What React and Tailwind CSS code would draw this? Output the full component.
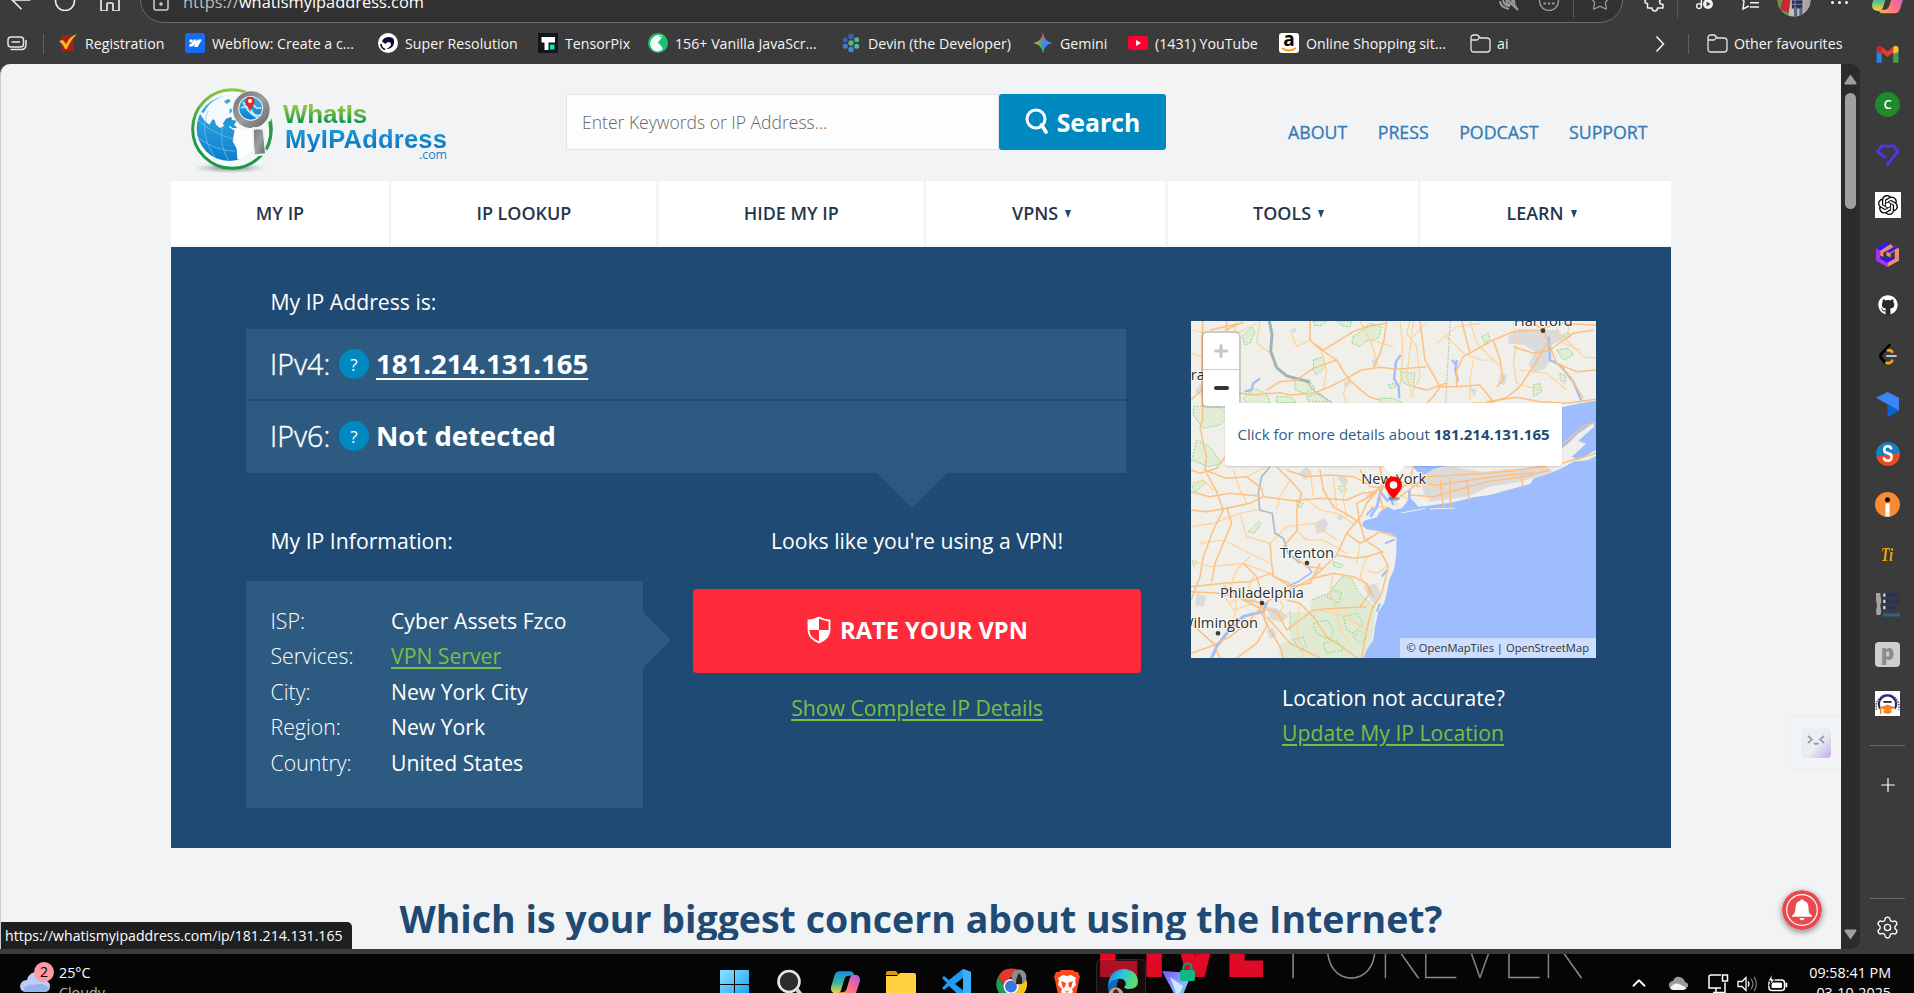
import React from "react";
import { Settings, Plus, ChevronUp, ArrowLeft, Star } from "lucide-react";
import { FaGithub } from "react-icons/fa";
import { SiOpenai } from "react-icons/si";

/* ---------- Browser toolbar ---------- */

function Copilot({ className, id }) {
  return (
    <svg className={className} viewBox="0 0 28 28">
      <defs>
        <linearGradient id={id + "a"} x1="0" y1="0" x2="0" y2="1">
          <stop offset="0" stopColor="#1b8ae0" />
          <stop offset=".5" stopColor="#2fb8a0" />
          <stop offset="1" stopColor="#ffd23c" />
        </linearGradient>
        <linearGradient id={id + "b"} x1="1" y1="0" x2="0" y2="1">
          <stop offset="0" stopColor="#a55be8" />
          <stop offset=".5" stopColor="#ff6a8d" />
          <stop offset="1" stopColor="#ffb04a" />
        </linearGradient>
      </defs>
      <path d="M9 3h9q3 0 4 4h-5q-3 0-4 3l-3 10q-1 3-4 3-6 0-5-6l3-10Q5 3 9 3z" fill={`url(#${id}a)`} />
      <path d="M19 25h-9q-3 0-4-3h5q3 0 4-3l3-10q1-3 4-3 6 0 5 6l-3 9q-1 4-5 4z" fill={`url(#${id}b)`} />
    </svg>
  );
}

function Toolbar() {
  return (
    <div className="flex h-[23px] shrink-0 items-end overflow-hidden">
      <div className="flex h-[47px] w-full shrink-0 items-center text-[#f3f3f3]">
        <ArrowLeft className="ml-[6px] size-[30px] shrink-0" strokeWidth={1.3} />
        <svg className="ml-[18px] size-[22px] shrink-0" viewBox="0 0 22 22" fill="none" stroke="currentColor" strokeWidth="1.6">
          <circle cx="11" cy="12" r="9.5" />
        </svg>
        <svg className="ml-[23px] size-[22px] shrink-0" viewBox="0 0 22 22" fill="none" stroke="currentColor" strokeWidth="1.6">
          <path d="M2 9l9-7 9 7v12q0 1-1 1h-4q-1 0-1-1v-6q0-1-1-1H9q-1 0-1 1v6q0 1-1 1H3q-1 0-1-1z" />
        </svg>
        <div className="ml-[19px] flex h-[47px] w-[1483px] shrink-0 items-center rounded-full border border-[#6e6e6e] bg-[#313131]">
          <svg className="mt-[2px] ml-[12px] h-[20px] w-[16px] shrink-0" viewBox="0 0 16 20" fill="none" stroke="#cfcfcf" strokeWidth="1.500">
            <rect x="1" y="1" width="14" height="18" rx="2" />
            <circle cx="8" cy="13" r="1" fill="#cfcfcf" />
          </svg>
          <span className="mt-[6px] ml-[14px] text-[16.400px] leading-none text-[#bdbdbd]">
            https://<span className="text-white">whatismyipaddress.com</span>
          </span>
          <div className="ml-auto flex items-center text-[#9a9a9a]">
            <svg className="size-[22px]" viewBox="0 0 22 22" fill="none" stroke="currentColor" strokeWidth="2">
              <path d="M2 12q0 6 9 8M5 11q1 6 7 6M2 3l18 18" />
              <path d="M12 9q6 2 4 8l3 1" />
              <circle cx="11.500" cy="12.500" r="3" />
            </svg>
            <svg className="ml-[18px] size-[22px]" viewBox="0 0 22 22" fill="none" stroke="currentColor" strokeWidth="1.400">
              <circle cx="11" cy="12" r="9.500" />
              <path d="M5.500 14.500h2.400M9.800 14.500h2.400M14.100 14.500h2.400" strokeWidth="2.200" />
            </svg>
            <div className="ml-[13px] h-[36px] w-px bg-[#5a5a5a]" />
            <Star className="mr-[10px] ml-[14px] size-[24px]" strokeWidth={1.3} />
          </div>
        </div>
        <svg className="ml-[20px] size-[24px] shrink-0" viewBox="0 0 24 24" fill="none" stroke="currentColor" strokeWidth="1.500" strokeLinejoin="round">
          <path d="M4 6h5q0-4 3-4t3 4h5v5q-3.500 0-3.500 2.700T20 16.500V20h-5.500q0 3-2.700 3T9 20H4.500v-4.500Q2 15.500 2 13.500T4.500 11z" />
        </svg>
        <div className="ml-[10px] h-[36px] w-px shrink-0 bg-[#5a5a5a]" />
        <svg className="ml-[17px] size-[20px] shrink-0" viewBox="0 0 20 20" fill="none" stroke="currentColor" strokeWidth="1.400">
          <circle cx="4" cy="16" r="2.400" />
          <path d="M6.400 16V3l6-2" />
          <circle cx="13" cy="14" r="5" fill="#f3f3f3" stroke="none" />
          <path d="M11.600 11.500v5l4-2.500z" fill="#3b3b3b" stroke="none" />
        </svg>
        <svg className="ml-[23px] size-[22px] shrink-0" viewBox="0 0 22 22" fill="none" stroke="currentColor" strokeWidth="1.500">
          <path d="M1 7l5 5-1 8 6-3M12 9.500h9M12 13.700h9M12 18h9" />
        </svg>
        <svg className="ml-[17px] size-[34px] shrink-0" viewBox="0 0 32 32">
          <defs>
            <clipPath id="av"><circle cx="16" cy="16" r="15.500" /></clipPath>
          </defs>
          <g clipPath="url(#av)">
            <path d="M0 0h32v32H0z" fill="#c9bdb0" />
            <path d="M0 14h11v18H0z" fill="#6d8f3e" />
            <path d="M6 12l7 2-2 14-8-3z" fill="#c22a35" />
            <path d="M14 10h10v14H14z" fill="#27314f" />
            <path d="M16 23h3v9h-3zM21 23h3v9h-3z" fill="#55628e" />
            <path d="M14 16h10M14 20h10M17 10v14" stroke="#8a94b8" strokeWidth=".8" />
            <path d="M25 14h9v18h-9z" fill="#a9a4a0" />
          </g>
        </svg>
        <div className="mt-[5px] ml-[20px] flex shrink-0 gap-[4px]">
          <i className="size-[3px] rounded-full bg-white" />
          <i className="size-[3px] rounded-full bg-white" />
          <i className="size-[3px] rounded-full bg-white" />
        </div>
        <Copilot className="ml-[23px] size-[34px] shrink-0" id="cp1" />
      </div>
    </div>
  );
}

/* ---------- Favourites bar ---------- */

const folder = (
  <svg className="size-[21px]" viewBox="0 0 21 21" fill="none" stroke="#e6e6e6" strokeWidth="1.300">
    <path d="M1 5q0-3 3-3h3.500l3 3H17q3 0 3 3v8q0 3-3 3H4q-3 0-3-3zM1 7h5.500q1 0 1.500-.7L9.500 4" />
  </svg>
);

const icons = {
  reg: (
    <svg viewBox="0 0 20 20">
      <path d="M3 2h12l1 16H3z" fill="#a81f1c" />
      <path d="M1 8l4-1 3 4q4-8 11-10-7 7-10 15H7q-2-5-6-8z" fill="#f5b81c" />
    </svg>
  ),
  webflow: (
    <svg viewBox="0 0 20 20">
      <rect width="20" height="20" rx="2.500" fill="#146ef5" />
      <path d="M17 6.500l-4.500 7.500H9l1.400-3Q8.500 13.700 4.500 14V11q2 0 3-1.500H4.500V6.500h3.200v2.500l1.400-2.500h2.300v2.500l1.500-2.500z" fill="#fff" />
    </svg>
  ),
  superres: (
    <svg viewBox="0 0 20 20">
      <circle cx="10" cy="10" r="10" fill="#fff" />
      <path d="M4 8q2-4 7-4 6 0 5 6-1 6-8 6 5-2 5-5 0-2-2.500-2Q8 9 8 11q-3-1-4-3z" fill="#0b0b33" />
      <path d="M3 11q0 4 4 5.500" stroke="#0b0b33" strokeWidth="1.600" fill="none" />
    </svg>
  ),
  tensor: (
    <svg viewBox="0 0 20 20">
      <rect width="20" height="20" fill="#0f171c" />
      <path d="M3.500 4H17v5.500h-6.500V17H6.500V9.500h-3z" fill="#fff" />
      <path d="M12 11.500h4.500v5H12z" fill="#00f0b0" />
    </svg>
  ),
  vanilla: (
    <svg viewBox="0 0 20 20">
      <circle cx="10" cy="10" r="10" fill="#1dbf73" />
      <path d="M15 3L10.500 9.500 15 15.500q-2 3-6 3-6-1-7-8 1-7 8-8.500 3 0 5 1z" fill="#f4fff9" />
      <path d="M11 3l4 1-5 6" stroke="#1dbf73" fill="none" />
    </svg>
  ),
  devin: (
    <svg viewBox="0 0 20 20">
      <circle cx="10" cy="3.500" r="2.700" fill="#3e5fc0" />
      <circle cx="4.300" cy="6.700" r="2.500" fill="#3b5cb8" />
      <circle cx="15.700" cy="6.700" r="2.500" fill="#4cb68f" />
      <circle cx="10" cy="10" r="2.700" fill="#4cb68f" />
      <circle cx="4.300" cy="13.300" r="2.500" fill="#3f7fc8" />
      <circle cx="15.700" cy="13.300" r="2.500" fill="#53b9a0" />
      <circle cx="10" cy="16.500" r="2.700" fill="#3e8fdc" />
    </svg>
  ),
  gemini: (
    <svg viewBox="0 0 20 20">
      <defs>
        <linearGradient id="gm1" x1="0" y1=".5" x2="1" y2=".5">
          <stop offset="0" stopColor="#fbbc04" />
          <stop offset=".35" stopColor="#5fae6a" />
          <stop offset=".55" stopColor="#4285f4" />
          <stop offset="1" stopColor="#3186ff" />
        </linearGradient>
        <linearGradient id="gm2" x1="0" y1="0" x2="0" y2="1">
          <stop offset="0" stopColor="#ff4641" />
          <stop offset=".45" stopColor="#ff4641" stopOpacity="0" />
          <stop offset=".65" stopColor="#0ebc5f" stopOpacity="0" />
          <stop offset="1" stopColor="#0ebc5f" />
        </linearGradient>
      </defs>
      <path d="M10 0q1.500 8.500 9.500 10-8 1.500-9.500 10Q8.500 11.500.5 10 8.500 8.500 10 0z" fill="url(#gm1)" />
      <path d="M10 0q1.500 8.500 9.500 10-8 1.500-9.500 10Q8.500 11.500.5 10 8.500 8.500 10 0z" fill="url(#gm2)" />
    </svg>
  ),
  youtube: (
    <svg viewBox="0 0 20 20">
      <rect y="3" width="20" height="14" rx="3" fill="#ff0033" />
      <path d="M8 7v6l5-3z" fill="#fff" />
    </svg>
  ),
  amazon: (
    <div className="relative flex size-[20px] items-center justify-center rounded-[3px] bg-white text-[19px] leading-none font-bold text-black">
      <span className="-mt-[7px]">a</span>
      <svg className="absolute inset-x-0 bottom-0" viewBox="0 0 20 6">
        <path d="M3 1q7 5 14 0" stroke="#ff9900" strokeWidth="1.800" fill="none" />
      </svg>
    </div>
  ),
  folder,
};

const bookmarks = [
  ["reg", "Registration", "w-[127px]"],
  ["webflow", "Webflow: Create a c...", "w-[193px]"],
  ["superres", "Super Resolution", "w-[160px]"],
  ["tensor", "TensorPix", "w-[110px]"],
  ["vanilla", "156+ Vanilla JavaScr...", "w-[193px]"],
  ["devin", "Devin (the Developer)", "w-[192px]"],
  ["gemini", "Gemini", "w-[95px]"],
  ["youtube", "(1431) YouTube", "w-[151px]"],
  ["amazon", "Online Shopping sit...", "w-[191px]"],
  ["folder", "ai", "w-[182px]"],
];

function FavouritesBar() {
  return (
    <div className="flex h-[41px] shrink-0 items-center text-[14.200px] whitespace-nowrap text-[#f5f5f5]">
      <svg className="ml-[7px] h-[15px] w-[20px]" viewBox="0 0 20 15" fill="none" stroke="#e6e6e6" strokeWidth="1.500">
        <rect x="1" y="1" width="15.500" height="10" rx="3" />
        <path d="M4.500 6H13M3.500 13.500H14q5 0 5-5V4" />
      </svg>
      <div className="mr-[14px] ml-[16px] h-[20px] w-px bg-[#616161]" />
      {bookmarks.map(([k, label, w]) => (
        <div key={k} className={"flex shrink-0 items-center gap-[7px] " + w}>
          <div className="w-[20px] shrink-0">{icons[k]}</div>
          <span>{label}</span>
        </div>
      ))}
      <svg className="ml-[3px] h-[18px] w-[10px]" viewBox="0 0 10 18" fill="none" stroke="#f5f5f5" strokeWidth="1.500">
        <path d="M1.500 1.500L8.500 9l-7 7.500" />
      </svg>
      <div className="mr-[18px] ml-[23px] h-[20px] w-px bg-[#616161]" />
      <div className="flex items-center gap-[6px]">
        {folder}
        <span>Other favourites</span>
      </div>
    </div>
  );
}

/* ---------- Site header ---------- */

function Logo() {
  return (
    <div className="flex w-[261px]">
      <svg className="h-[88px] w-[86px] shrink-0" viewBox="27 18 258 264">
        <defs>
          <linearGradient id="ring" x1="0" y1="0" x2="0" y2="1">
            <stop offset="0" stopColor="#8dc63f" />
            <stop offset=".5" stopColor="#2b9a48" />
            <stop offset="1" stopColor="#119a48" />
          </linearGradient>
          <linearGradient id="sea" x1="0" y1="0" x2="0" y2="1">
            <stop offset="0" stopColor="#3db1e8" />
            <stop offset="1" stopColor="#0c7fcb" />
          </linearGradient>
          <radialGradient id="shade">
            <stop offset="0" stopColor="#555" stopOpacity=".75" />
            <stop offset="1" stopColor="#888" stopOpacity="0" />
          </radialGradient>
          <linearGradient id="metal" x1="0" y1="0" x2="1" y2="1">
            <stop offset="0" stopColor="#77787a" />
            <stop offset=".5" stopColor="#9c9ea0" />
            <stop offset="1" stopColor="#6d6e70" />
          </linearGradient>
          <clipPath id="gc"><circle cx="148" cy="145" r="99" /></clipPath>
        </defs>
        <ellipse cx="150" cy="264" rx="108" ry="16" fill="url(#shade)" />
        <circle cx="156" cy="147" r="118" fill="#f6f8f9" stroke="url(#ring)" strokeWidth="9" />
        <circle cx="148" cy="145" r="98" fill="url(#sea)" />
        <g clipPath="url(#gc)">
          <path d="M72 98Q92 54 150 44l110-4v110l-60 6-40-6-14-10-14-2-12 6-12-10-4-14-6-2-10 16-14-12-10-14-6-12z" fill="#f5f9fb" />
          <path d="M164 148l46 4h50v60l-44 4-16 14-16 12-12-6-2-30-12-22z" fill="#fdfefe" />
          <path d="M132 64l14-8 6 8-12 8zM100 78l12-14M150 84l8 8-10 10z" fill="#2ea3de" />
          <path d="M128 132l10-16 16-6 2 10 14 2-8 12 10 10-14 0-8-6-10 6z" fill="#1f97d8" />
          <path d="M50 170q50 40 115 44M54 120q40 40 110 58M84 92q-30 70 26 148M128 138q-12 60 20 106" fill="none" stroke="#7cc7ef" strokeWidth="2" />
        </g>
        <path d="M214 34q60 0 62 60l-4 30q-6 14-22 16l-20-4z" fill="#f1f3f5" />
        <circle cx="214" cy="89" r="57" fill="#f6f8f9" />
        <circle cx="214" cy="89" r="46" fill="url(#metal)" stroke="url(#metal)" strokeWidth="18" />
        <circle cx="212" cy="85" r="37" fill="#f2f6f8" />
        <circle cx="212" cy="85" r="34" fill="url(#sea)" />
        <path d="M184 84q20-12 30 8t30 12M190 66q10 30 44 48M200 56l30 28 14 0" fill="none" stroke="#cfe9f7" strokeWidth="5" />
        <path d="M211 92q-15-20-15-28a14 14 0 0 1 28 0q0 8-13 28z" fill="#dd2b22" />
        <circle cx="210" cy="63" r="6" fill="#fff" />
        <path d="M216 142l38-2 6 86-42 4z" fill="#f1f3f5" />
        <path d="M222 150q14-5 26 0l7 70-30 3q-4-40-3-73z" fill="url(#metal)" />
        <path d="M269 124q10 48-10 84" fill="none" stroke="#2b9a48" strokeWidth="9" />
      </svg>
      <div className="ml-[8px] flex flex-col pt-[16px] font-['Liberation_Sans',Arial,sans-serif] font-bold">
        <span className="bg-linear-to-b from-[#8dc63f] from-20% to-[#119a48] to-80% bg-clip-text text-[26px] leading-[24px] tracking-[-0.200px] text-transparent">
          WhatIs
        </span>
        <span className="bg-linear-to-b from-[#1da1e0] to-[#0a6fb8] bg-clip-text pl-[2px] text-[25.500px] leading-[26px] tracking-[0.220px] text-transparent">
          MyIPAddress
        </span>
        <span className="-mt-[3px] self-end font-['Open_Sans'] text-[12.400px] leading-[12px] font-normal text-[#1584c7]">.com</span>
      </div>
    </div>
  );
}

function SiteHeader() {
  return (
    <div className="flex h-[117px] items-start">
      <div className="pt-[22px] pl-[18px]">
        <Logo />
      </div>
      <div className="mt-[30px] ml-[116px] flex h-[56px] w-[600px]">
        <div className="flex flex-1 items-center border border-[#e1e3e5] bg-[#fdfdfd] pl-[15px] text-[17.550px] font-light text-[#666]">
          Enter Keywords or IP Address...
        </div>
        <button className="flex w-[167px] items-center justify-center gap-[8px] rounded-[3px] bg-[#0088c1] pt-[1px] text-[24.800px] font-bold text-white">
          <svg className="-mt-[3px] h-[26px] w-[24px]" viewBox="0 0 24 26" fill="none" stroke="#fff">
            <circle cx="11" cy="11" r="9" strokeWidth="3" />
            <path d="M16.500 17l4.500 7" strokeWidth="3.800" strokeLinecap="round" />
          </svg>
          Search
        </button>
      </div>
      <div className="mt-[53px] ml-[122px] flex gap-[30.500px] text-[17.750px] leading-[30px] text-[#337ab7] [-webkit-text-stroke:0.300px_#337ab7]">
        <a>ABOUT</a>
        <a>PRESS</a>
        <a>PODCAST</a>
        <a>SUPPORT</a>
      </div>
    </div>
  );
}

const nav = [
  ["MY IP", false, "w-[218px]"],
  ["IP LOOKUP", false, "w-[265px]"],
  ["HIDE MY IP", false, "w-[265px]"],
  ["VPNS", true, "w-[239px]"],
  ["TOOLS", true, "w-[250px]"],
  ["LEARN", true, "flex-1"],
];

function Nav() {
  return (
    <div className="mb-px flex h-[65px] gap-[2.400px]">
      {nav.map(([t, sub, w]) => (
        <div key={t} className={"flex items-center justify-center gap-[7px] bg-white text-[17.950px] font-semibold text-[#26364a] " + w}>
          {t}
          {sub && <i className="mr-[8px] size-0 border-x-[3.500px] border-t-[8px] border-x-transparent border-t-[#1f4a73]" />}
        </div>
      ))}
    </div>
  );
}

/* ---------- Map ---------- */

const mainRoads = [
  "M68 33V330L60 350 70 400 80 440 75 480 110 545 130 600 100 660 70 740 60 800 33 870",
  "M140 33L138 60 190 35M90 60L190 38M390 33V90L410 110 470 150 500 200 530 230 570 262 600 270",
  "M620 33L612 90 600 130 580 175M33 270L80 225 120 205 150 245 220 255 300 248 330 255 400 250 450 230 500 205 545 180 600 172 650 178 740 170",
  "M400 100L430 120 520 65 560 50 620 40M470 150L400 175 350 210 300 215 260 240",
  "M720 33L735 150 780 230 760 260 740 280M780 230H830V180L850 140 940 90 1000 65 1080 60 1130 40 1248 45",
  "M845 33L870 130M830 230L900 225 940 275M940 90L960 150 970 210 950 230M1050 33L1090 60 1110 110 1130 160 1170 200 1210 265",
  "M1000 110L1060 130 1110 120 1180 70 1240 60M1130 160L1190 185 1248 180M1100 100L1060 170 1020 230 980 262 930 278 880 279",
  "M920 275L1010 262 1080 275 1160 280 1248 268M700 230L740 240 800 220",
  "M33 600L80 605 140 595 210 580 250 560 245 535 200 500 140 505 75 480",
  "M33 480L60 490 110 475 135 440M250 560L340 572 420 565 500 570 545 550 590 545",
  "M33 545L90 560 150 550 240 558M140 590L155 640 130 700 105 760 95 815",
  "M290 470L330 510 365 550 350 600 352 660 310 710M320 480L380 500 450 495 520 500 560 520 600 510",
  "M420 480L430 540 460 590 520 625 540 640 530 580 570 560 610 520",
  "M590 545L560 580 545 615 500 670 470 735 430 775 395 805 350 830 300 850 255 880 200 940 150 980 90 1010 33 1030",
  "M540 640L555 690 600 720 625 770 605 850 575 900 560 960 545 1044",
  "M500 670L540 700 560 690 600 665 648 680M470 735L520 745 560 740 610 725",
  "M400 805L460 790 520 800 560 820 580 860M430 775L380 770 340 735",
  "M33 830L130 820 210 815 270 790 330 830 390 820 420 760",
  "M190 760L230 800 245 850 240 900 270 960 300 1010 310 1044M130 825L180 865 230 890 290 905 320 960 400 900 470 895 560 890",
  "M270 700L275 760 280 800 330 820M33 845L120 850 200 870 250 880",
  "M320 870L360 880 400 920 440 980 500 1020 530 1044M250 900L260 950 230 1000 170 1044M33 940L100 1000 120 1044",
  "M260 920L330 1000 420 1044M540 890L570 850 560 820",
  "M600 480L612 520 600 560 610 600M640 510L680 520 720 530M660 560L740 500 830 495 920 490 1020 480 1146 460 1200 445 1248 430",
  "M690 555L760 560 830 540 920 515 1030 500 1110 480M700 520L780 525 870 510 980 495 1060 488",
  "M780 510L790 590M810 505L812 590M860 510L868 570M1025 495L1028 528M1146 405L1180 375 1210 348 1240 340",
  "M600 470L610 530 560 560M700 470L690 510 660 540M540 480L570 530 640 535 700 520",
];
const minorRoads = [
  "M33 60L100 75 170 70 230 40M33 130L68 140M170 33L160 90 130 130 68 160M240 33L230 100 270 130",
  "M330 60L350 110 390 90M420 110L440 180 430 240M540 33L570 90 590 150M510 205L490 250 500 280M570 90L640 110",
  "M690 33L680 70 710 110 720 200 690 260M735 40L700 80M800 80L850 130 900 150 940 150M870 33L890 100 960 170M770 100L830 50 900 40",
  "M660 33L668 100 665 190 655 260M700 33L690 120 680 200 700 260M1020 180L1100 190 1160 240M1130 50L1150 100 1200 120",
  "M1000 33L1010 100 1000 160 1010 220 1080 240M1170 33L1160 90 1210 140 1248 145M880 150L870 210 870 270",
  "M33 520L70 510 100 540M160 480L180 540 200 580M200 500L260 470M370 560L420 600 470 610 520 640M330 510L300 560 290 600",
  "M33 650L100 640 180 610 230 600M180 610L200 680 270 700 320 650 400 640 470 690M60 700L130 690 190 720 270 760",
  "M33 750L90 770 190 760 270 790M350 660L380 690 430 690 500 730M150 830L170 780 210 740",
  "M130 850L160 900 220 880M170 870L160 940 110 960M220 800L200 850 150 880M290 850L310 890 280 930 330 910",
  "M460 790L450 850 470 895 480 960 510 1000M420 900L500 920 560 960M360 880L350 960 370 1044M560 740L540 800 560 830M540 700L530 760",
  "M620 770L590 790 560 780M390 480L400 560M460 500L470 590M500 500L490 570 500 620M570 590L620 590 600 610",
  "M640 540L650 590M630 540L690 570M730 480L760 530 860 550M880 485L930 510M960 480L1000 510M1080 475L1100 490",
];
const parks = [
  "M520 80l30-20 20-20 35 10-10 35-40 10-15 15-25-10z", "M215 50l10 15-15 35-15 5-8-25z", "M40 290l70-5 35 30-25 30-50 10-30-40z",
  "M50 390l40 20 35 50-40 10-50-20z", "M345 205l45 10 15 20-30 15-30-10z", "M400 150l30-10 5 30-25 25-10-15z",
  "M660 185l45 5-5 40-30-10z", "M905 80l20-10 5 20-15 10z", "M1130 120l35-5 15 20-30 15z", "M1060 225l20-5 5 25-25 15z",
  "M190 265l30-30 40 15 10 30h-70z", "M600 265l40 0 30 15h-70z", "M35 530l30-20 10 10-30 25z", "M205 665l30-30 8 5-20 30z",
  "M36 750l15 5-10 15z", "M460 755l30 10-10 10-20-8z", "M350 572l20 8-8 12-14-8z", "M1150 75l15-8 5 15-12 5z",
  "M1140 190l18 10-4 20-14-12z", "M290 260l40 0 20 18h-60z", "M380 260l40-10 25 25h-60z", "M475 530l18-4 8 14-18 6z", "M625 225l18-5 5 10-18 6z",
  "M400 33l40 0-15 14h-20zM470 33l45 0-5 18-25-4z",
];
const urban = [
  "M985 80l30-25 60 5 60 0 20 25-40 20 0 40-20 30-30 15-20-25 20-40-30-20-50-5z", "M720 485l90-15 100 15 110-10 80-5 20 15-100 30-90 15-70 30-110 15-20-30z",
  "M405 640l25-15 15 15-10 25-25 5z", "M355 490l25-20 15 20-20 20z", "M470 505l20-10 15 20-15 10z", "M550 830l40-10 15 40-20 25-15-20z",
  "M260 890l30 5 35 25-20 15-35-10z", "M490 220l20-15 5 15-20 15z", "M575 150l15-5 5 20-15 5z", "M335 55h15l-5 12h-10z", "M870 230l20 10-8 20z",
  "M60 220l15 10-15 25-15-10z", "M50 850l30 10-10 30-25-5z", "M260 960l20-8 10 25-20 10z", "M470 620l15-8 8 12-15 8z", "M190 860l30-5 10 20-25 5z", "M960 190l20 5-5 30-20-5z",
];

function MapView() {
  return (
    <div className="relative h-[337px] w-[405px] overflow-hidden">
      <svg className="h-[337px] w-[405px]" viewBox="33 33 1215 1011">
        <rect x="33" y="33" width="1215" height="1011" fill="#f0efe9" />
        <path d="M395 870l50-20 40-50 30 5 20 40 50 50-5 60-10 90H295l10-50 25 0 0-85 60-5z" fill="#e0ead2" />
        <path d="M400 940l40-10 20 30-10 30-40-20zM440 860l20-20 25 10-10 30zM490 920l40-10 20 30-30 30-20-10zM430 1000l40-10 20 30-50 10zM520 980l20-20 20 20-20 20zM395 870l50-20 40-50 30 5 20 40 50 50M330 905l0 60M340 990l30-10 10 30-20 10z" fill="none" stroke="#8fd890" strokeWidth="3" strokeDasharray="6 4" />
        {urban.map((d) => <path key={d} d={d} fill="#dcdbdb" />)}
        {parks.map((d) => <path key={d} d={d} fill="#e3ecd5" stroke="#85dc8c" strokeWidth="3" strokeDasharray="6 4" />)}
        <g fill="none" stroke="#ffd396" strokeWidth="3.500" strokeLinejoin="round">
          {minorRoads.map((d) => <path key={d} d={d} />)}
        </g>
        <path d="M1248 272L1200 280 1146 292 720 440 700 470 712 485 735 492 765 476 790 470 1146 415 1165 400 1195 370 1242 338 1242 350 1195 392 1218 402 1175 440 1195 450 1248 420z" fill="#9dbdff" />
        <path
          d="M1248 437L1225 450 1180 455 1145 475 1110 490 1062 505 1050 522 930 555 880 562 820 577 740 588 715 590 700 572 688 562 678 580 665 595 640 600 625 590 600 605 590 622 552 632 545 645 560 658 600 664 635 672 650 685 649 730 643 775 628 810 620 850 612 880 595 905 585 950 580 990 560 1020 550 1044H1248z"
          fill="#9dbdff"
        />
        <path d="M665 609l70-14M750 597l75-3" stroke="#f0efe9" strokeWidth="3" />
        <g fill="none" stroke="#9dbdff" strokeLinejoin="round">
          <path d="M662 135l-14 20-6 50 14 25 2 35M830 150l-4 30 8 34M816 150l12 14M240 205l-20 15-6 20-20 4M1106 80l4 70 30 15 40 50 25 60" strokeWidth="7" />
          <path d="M95 1044l15-35 35-45 45-45 60-15 10-25" strokeWidth="9" />
          <path d="M320 830l40-18 35-25-15-25" strokeWidth="5" />
          <path d="M605 530l-14 60-20 30M600 545l25 30M625 545l15 40M688 540l0 25" strokeWidth="8" />
          <path d="M560 615l20-22M600 880l-10 25M615 700l30-12M605 800l16-20M645 645l3 18" strokeWidth="6" />
        </g>
        <path d="M270 470l-25 30-10 50 4 50 38 10 8 60 25 15 15 45 35 30" fill="none" stroke="#a9bccb" strokeWidth="5" />
        <path d="M375 210l30 35 50 32" fill="none" stroke="#b6c0c6" strokeWidth="4" />
        <path d="M268 33l8 40-4 50 18 50 30 25 70 18" fill="none" stroke="#9fb5b0" strokeWidth="9" />
        <path d="M811 33l-6 100-8 145" fill="none" stroke="#c2c2c4" strokeWidth="3.500" strokeDasharray="5 3" />
        <g fill="none" stroke="#fdc080" strokeWidth="4.500" strokeLinejoin="round">
          {mainRoads.map((d) => <path key={d} d={d} />)}
        </g>
        <g fill="#3c3c3c">
          <circle cx="1089" cy="62" r="7" />
          <circle cx="381" cy="759" r="7" />
          <circle cx="246" cy="879" r="7" />
          <circle cx="114" cy="970" r="7" />
        </g>
        <g fontSize="43.900" fill="#2c2c2c" stroke="#fff" strokeOpacity=".85" strokeWidth="6" strokeLinejoin="round" paintOrder="stroke" fontFamily="'Open Sans', sans-serif">
          <text x="1090" y="47" textAnchor="middle">Hartford</text>
          <text x="-13" y="209">Scranton</text>
          <text x="641" y="523" textAnchor="middle">New York</text>
          <text x="381" y="744" textAnchor="middle">Trenton</text>
          <text x="246" y="864" textAnchor="middle">Philadelphia</text>
          <text x="234" y="955" textAnchor="end">Wilmington</text>
        </g>
      </svg>
      <div className="absolute top-[10px] left-[10px] flex h-[77px] w-[40px] flex-col overflow-hidden rounded-[6px] border-2 border-black/15 bg-white bg-clip-padding">
        <div className="flex flex-1 items-center justify-center border-b border-[#ccc]">
          <svg className="size-[16px]" viewBox="0 0 16 16" stroke="#c8c8c8" strokeWidth="3.200" strokeLinecap="round">
            <path d="M2.500 8h11M8 2.500v11" />
          </svg>
        </div>
        <div className="flex flex-1 items-center justify-center">
          <div className="h-[4px] w-[15px] rounded-full bg-[#333]" />
        </div>
      </div>
      <div className="absolute top-[82px] left-[34px] flex h-[63px] w-[337px] items-center justify-center rounded-[3px] bg-white text-[15px] whitespace-nowrap text-[#2f5d87] shadow-[0_1px_2px_rgba(0,0,0,0.150)]">
        <span>Click for more details about&nbsp;</span>
        <b className="text-[#1f4a73]">181.214.131.165</b>
      </div>
      <svg className="absolute top-[144px] left-[187px] h-[36px] w-[32px]" viewBox="0 0 32 36">
        <path d="M4 0h24L16 12z" fill="#fff" />
        <ellipse cx="16" cy="33.500" rx="6" ry="2" fill="#555" opacity=".5" />
        <path d="M15.500 34Q7 25 7 20a8.500 8.500 0 0 1 17 0q0 5-8.500 14z" fill="#fe0000" />
        <circle cx="15.500" cy="20" r="3.800" fill="#fff" />
      </svg>
      <div className="absolute right-0 bottom-0 flex h-[20px] items-center bg-white/50 pr-[7px] pl-[7px] text-[11.200px] whitespace-nowrap text-[#333]">
        © OpenMapTiles | OpenStreetMap
      </div>
    </div>
  );
}

/* ---------- Hero ---------- */

const info = [
  ["ISP:", "Cyber Assets Fzco"],
  ["Services:", "VPN Server", true],
  ["City:", "New York City"],
  ["Region:", "New York"],
  ["Country:", "United States"],
];

const greenLink = "text-[#76c043] underline decoration-[1.500px] underline-offset-[3px]";

function IpRow({ label, value, link, className }) {
  return (
    <div className={"flex items-center bg-[#2d5a80] pl-[24px] leading-none " + className}>
      <span className="w-[69px] text-[28.600px] font-light [-webkit-text-stroke:0.400px_white]">{label}</span>
      <span className="flex size-[30px] items-center justify-center rounded-full bg-[#0088c1] text-[17px]">?</span>
      <b className={"ml-[7px] text-[27.500px] " + (link ? "underline decoration-2 underline-offset-[4px]" : "")}>{value}</b>
    </div>
  );
}

function Hero() {
  return (
    <div className="flex h-[601px] bg-[#1f4a73] pl-[75px] text-[21.200px] whitespace-nowrap text-white">
      <div className="w-[880px] shrink-0">
        <div className="mt-[40px] mb-[12px] pl-[24.500px] leading-[30px]">My IP Address is:</div>
        <IpRow label="IPv4:" value="181.214.131.165" link className="h-[70px]" />
        <IpRow label="IPv6:" value="Not detected" className="mt-[2px] h-[72px] pb-[2px]" />
        <div className="relative flex">
          <i className="absolute top-0 left-[631px] size-0 border-x-[35px] border-t-[35px] border-x-transparent border-t-[#2d5a80]" />
          <div className="w-[397px] shrink-0 pt-[53px]">
            <div className="pl-[24.500px] leading-[30px]">My IP Information:</div>
            <div className="relative mt-[25px] h-[227px] bg-[#2d5a80] pt-[22px] pl-[24.500px]">
              <i className="absolute top-[31px] left-full size-0 border-y-[28px] border-l-[28px] border-y-transparent border-l-[#2d5a80]" />
              {info.map(([k, v, link]) => (
                <div key={k} className="flex h-[35.400px] items-center leading-none">
                  <span className="w-[120.500px] text-[21.300px] font-light">{k}</span>
                  <span className={link ? greenLink : ""}>{v}</span>
                </div>
              ))}
            </div>
          </div>
          <div className="ml-[50px] flex w-[448px] shrink-0 flex-col items-center pt-[53px]">
            <div className="leading-[30px]">Looks like you're using a VPN!</div>
            <button className="mt-[33px] flex h-[84px] w-full items-center justify-center gap-[9px] rounded-[4px] bg-[#ff2a39] pl-[1px] text-[23.700px] font-bold">
              <svg className="-mt-[2px] h-[28px] w-[24px]" viewBox="0 0 24 28">
                <path d="M12 1.500q6 3 10.500 3V14q0 8-10.500 12.500Q1.500 22 1.500 14V4.500q4.500 0 10.500-3z" fill="none" stroke="#fff" strokeWidth="1.800" />
                <path d="M12 1.500V14H1.500V4.500q4.500 0 10.500-3zM12 14h10.500Q22 22 12 26.500z" fill="#fff" />
              </svg>
              RATE YOUR VPN
            </button>
            <a className={"mt-[20px] leading-[30px] " + greenLink}>Show Complete IP Details</a>
          </div>
        </div>
      </div>
      <div className="mt-[74px] ml-[65px] flex w-[405px] flex-col items-center">
        <MapView />
        <div className="mt-[22px] leading-[35px]">
          <div>Location not accurate?</div>
          <a className={greenLink}>Update My IP Location</a>
        </div>
      </div>
    </div>
  );
}

/* ---------- Browser side bar ---------- */

const side = [
  <svg viewBox="0 0 24 24">
    <path d="M1.500 6v14h5V10z" fill="#1e88e5" /><path d="M22.500 6v14h-5V10z" fill="#43a047" />
    <path d="M6.500 10V4.500L12 9l5.500-4.500V10L12 14.500z" fill="#e53935" />
    <path d="M1.500 9.500V6q0-2.500 3-2.500l2 1V11z" fill="#c62828" /><path d="M22.500 9.500V6q0-2.500-3-2.500l-2 1V11z" fill="#fbc02d" />
  </svg>,
  <div className="flex size-[25px] items-center justify-center rounded-full bg-[#1e8a2b] text-[13px] leading-none font-semibold text-white">C</div>,
  <svg viewBox="0 0 24 24" fill="none" stroke="#5333ed" strokeWidth="2.600"><path d="M10.500 15.500L2.500 9 6 4h12l4 5-9.500 12-1-2" /></svg>,
  <div className="flex size-[26px] items-center justify-center bg-white text-black"><SiOpenai className="size-[20px]" /></div>,
  <svg viewBox="0 0 24 24">
    <path d="M12 0L1 6v12l11 6v-4l-7-4V9z" fill="#a633f5" />
    <path d="M12 0L1 6l4 2.500L15 3z" fill="#2a1bf5" />
    <path d="M15 2L5 8.500V13l3 1.500V10l10-5z" fill="#ee8a76" />
    <path d="M5 16l7 4 7-4-3-2-4 2-4-2z" fill="#2a1bf5" />
    <path d="M12 24l11-6V6l-4 2v8l-7 4z" fill="#ee8a76" />
    <path d="M23 6l-4-2-8 5v4l4 2v-4z" fill="#ee8a76" />
    <path d="M11 9l8-5 3 1.500-8 5z" fill="#2a1bf5" />
  </svg>,
  <div className="flex size-[20px] items-center justify-center rounded-full bg-[#24292f] text-white"><FaGithub className="size-[20px]" /></div>,
  <svg viewBox="0 0 24 24" fill="none" strokeLinecap="round">
    <path d="M14 3L6 11.500q-1.500 2 0 4l3.500 4" stroke="#050505" strokeWidth="2.800" />
    <path d="M12.500 8q2.500-.5 4 1.500M11 20q4 1 5.500-2" stroke="#ffa116" strokeWidth="2.600" />
    <path d="M11.500 13.500H20" stroke="#c4c4c4" strokeWidth="2" />
  </svg>,
  <svg viewBox="0 0 24 24"><path d="M1 5.500L12 0l11 5.500V18z" fill="#3d85f7" /><path d="M12 12l11 6-11 6.500z" fill="#0d62d6" /></svg>,
  <div className="flex size-[24px] items-center justify-center rounded-full bg-[linear-gradient(170deg,#1a7fc0_52%,#ee4a22_54%)] font-['Liberation_Sans'] text-[23px] leading-none font-bold text-white"><span className="scale-x-75">S</span></div>,
  <svg viewBox="0 0 24 24"><circle cx="12" cy="12" r="12" fill="#f68c34" /><circle cx="12" cy="7.500" r="2.400" fill="#0a0a0a" /><path d="M10 11h4v12.500h-4z" fill="#fff" /></svg>,
  <div className="flex size-[24px] items-center justify-center font-['Liberation_Serif'] text-[19px] leading-none font-bold text-[#f5a011] italic"><span className="scale-x-75">Ti</span></div>,
  <svg viewBox="0 0 24 24">
    <path d="M1 1h4l1 8-1 4 1 6-1 3H1.500L1 17l1-4-1-5z" fill="#a5a5a5" />
    <path d="M8 3h15M8 9h15M8 15h12" stroke="#263354" strokeWidth="3" /><path d="M8 3h2M8 9h2M8 15h2" stroke="#d5dbe6" strokeWidth="3" /><path d="M8 22h16" stroke="#2c6486" strokeWidth="3" />
  </svg>,
  <div className="flex size-[25px] items-center justify-center rounded-[4px] bg-[#cfcfcf] pb-[4px] text-[21px] leading-none font-extrabold text-[#8c8c8c]">p</div>,
  <svg className="bg-white" viewBox="0 0 24 24">
    <path d="M1.500 18a11 11 0 1 1 21 0" fill="none" stroke="#555" strokeWidth="1.500" strokeDasharray="1.500 1" />
    <path d="M5 17a8.300 8.300 0 1 1 14 0" fill="none" stroke="#2b2870" strokeWidth="2.200" />
    <path d="M8 10.500h8" stroke="#333" strokeWidth="1.800" /><path d="M5 16l7-2.500 7 2.500-7 2.500zM8.500 18.500v2.200q3.500 1.500 7 0v-2.200" fill="#f58220" stroke="#f58220" strokeWidth=".8" /><path d="M5.500 16v6" stroke="#f58220" strokeWidth="1.500" />
  </svg>,
];

function SideBar() {
  return (
    <div className="flex w-[54px] shrink-0 flex-col items-center pl-px">
      <div className="-mt-[34px] flex flex-col">
        {side.map((el, i) => (
          <div key={i} className="flex h-[49.930px] items-center justify-center">
            <div className="flex w-[25px] justify-center *:shrink-0 [&>svg]:size-[25px]">{el}</div>
          </div>
        ))}
      </div>
      <div className="mt-[16px] h-px w-[35px] shrink-0 bg-[#6a6a6a]" />
      <Plus className="mt-[28px] size-[22px] shrink-0 text-white" strokeWidth={1.300} />
      <div className="mt-[102px] h-px w-[35px] shrink-0 bg-[#6a6a6a]" />
      <Settings className="mt-[16px] size-[25px] shrink-0 text-white" strokeWidth={1.300} />
    </div>
  );
}

/* ---------- Taskbar ---------- */

function TaskIcons() {
  return (
    <div className="absolute top-[14px] left-[719px] flex items-start gap-[24.400px] *:size-[31px] *:shrink-0">
      <svg viewBox="0 0 31 31">
        <defs><linearGradient id="win" x1="0" y1="0" x2="1" y2="1"><stop offset="0" stopColor="#8fe4ff" /><stop offset="1" stopColor="#109af5" /></linearGradient></defs>
        <path d="M1 2h14v14H1zM16 2h14v14H16zM1 17h14v14H1zM16 17h14v14H16z" fill="url(#win)" />
      </svg>
      <svg viewBox="0 0 31 31"><circle cx="15" cy="13.500" r="10.500" fill="#2c2c2e" stroke="#e4e6e8" strokeWidth="2.600" /><path d="M22.500 21l7 9" stroke="#cfd2d4" strokeWidth="4" /></svg>
      <Copilot id="cp2" />
      <svg viewBox="0 0 31 31">
        <path d="M1 5q0-2 2-2h8l3 4H1z" fill="#d99a08" /><path d="M1 8h11l3-3h14q2 0 2 2v24H1z" fill="#ffd143" /><path d="M6 31v-2q0-3 3-3h13q3 0 3 3v2z" fill="#0f6cbd" />
      </svg>
      <svg viewBox="0 0 31 31"><path d="M22 1l8 3v24l-8 3L8 18l-5 4-2-2 5-5-5-5 2-2 5 4zM23 9l-9 7 9 7z" fill="#1f9cf0" fillRule="evenodd" /><path d="M22 1l8 3v24l-8 3z" fill="#3bb0ff" /></svg>
      <svg viewBox="0 0 31 31">
        <path d="M2 9A15 15 0 0 1 29 9H15l-6 9z" fill="#e0392d" /><path d="M2 9A15 15 0 0 0 13 31l7-9-11-4z" fill="#1e9c4b" /><path d="M29 9a15 15 0 0 1-16 22l8-12-4-10z" fill="#fcc31e" />
        <circle cx="15" cy="18.500" r="7.500" fill="#fff" /><circle cx="15" cy="18.500" r="6" fill="#3578e5" />
        <circle cx="23" cy="9" r="7.500" fill="#8b8e8c" /><path d="M20 16q0-7 3-11 4 4 3 11z" fill="#222" />
      </svg>
      <div className="flex items-start justify-center pt-px">
        <svg className="h-[31px] w-[26px]" viewBox="0 0 26 31">
          <path d="M7 1h12l2 2 3 0 2 5-1 3-3 15-9 7-9-7L1 11 0 8l2-5 3 0z" fill="#fb4a1d" />
          <path d="M9 6l4 1 4-1 5 3-1 3 1 4-4 4 1 3-6 5-6-5 1-3-4-4 1-4-1-3z" fill="#fff" />
          <path d="M7 12l5 2-1 4-2 1zM19 12l-5 2 1 4 2 1zM10 21l3 1.500 3-1.500-3 3z" fill="#fb4a1d" />
        </svg>
      </div>
      <svg viewBox="0 0 31 31">
        <defs><linearGradient id="edge" x1="0" y1="0" x2="1" y2=".3"><stop offset="0" stopColor="#1b7fd6" /><stop offset=".5" stopColor="#2bc3e0" /><stop offset="1" stopColor="#5fdc6a" /></linearGradient></defs>
        <path d="M1 18Q2 2 17 1q13 1 14 12 0 8-9 8-4 0-5-2 3-2 1-6-3-4-9-1-7 3-8 10z" fill="url(#edge)" />
        <path d="M1 18q4-8 11-6-5 6 0 14l4 5H8q-7-4-7-13z" fill="#1665b8" />
        <circle cx="9" cy="27" r="7.500" fill="#c9a58c" /><path d="M5 31q0-9 4-10 4 2 4 10z" fill="#3a2b2b" />
      </svg>
      <svg className="!w-[36px]" viewBox="0 0 36 31">
        <defs><linearGradient id="vpn" x1="0" y1="0" x2="1" y2="1"><stop offset="0" stopColor="#7a4dff" /><stop offset=".6" stopColor="#8fb4ff" /><stop offset="1" stopColor="#36e6c2" /></linearGradient></defs>
        <path d="M0 3l30 2-10 24q-3 4-6 0z" fill="url(#vpn)" /><path d="M8 9l13 9-5 12z" fill="#d6f2ff" opacity=".85" />
      </svg>
    </div>
  );
}

function Taskbar() {
  return (
    <div className="relative flex h-[39px] w-full shrink-0 overflow-hidden bg-[#050505] text-[14.300px] text-white">
      <div className="absolute -top-[54px] left-[1094px] flex origin-left scale-x-[0.765] gap-[4px] font-['Open_Sans'] text-[104px] leading-[74px] font-extrabold text-[#e00a26]">LIVE</div>
      <div className="absolute -top-[52px] left-[1284px] origin-left scale-x-[0.855] font-['Lato'] text-[88px] leading-[84px] font-thin tracking-[-5px] text-[#9a948e] [-webkit-text-stroke:0.600px_#8a847e]">FOREVER</div>
      <div className="absolute top-[5px] left-[1096px] h-[50px] w-[50px] rounded-[5px] border border-white/10 bg-[#3a2226]/30" />
      <div className="flex pt-[9px] pl-[18px]">
        <div className="relative h-[30px] w-[34px]">
          <svg className="absolute top-[8px] left-[2px] h-[22px] w-[30px]" viewBox="0 0 30 22">
            <path d="M7 21q-7 0-7-6 1-6 7-6 2-8 10-8 7 1 8 8 5 2 5 6 0 6-6 6z" fill="#b9cdf5" /><path d="M3 20q2-8 12-6 8-3 14 3-1 4-5 4H7z" fill="#94b4ec" />
          </svg>
          <span className="absolute -top-[1px] left-[16px] flex size-[20px] items-center justify-center rounded-full bg-[#ff99a4] text-[14px] leading-none text-black">2</span>
        </div>
        <div className="ml-[7px] leading-[20px]">
          <div>25°C</div>
          <div className="text-[#b5b5b5]">Cloudy</div>
        </div>
      </div>
      <TaskIcons />
      <svg className="absolute top-[8px] left-[1179px] h-[20px] w-[17px]" viewBox="0 0 17 20">
        <path d="M4.500 9V5.500a4 4 0 0 1 8 0V9" fill="none" stroke="#0ba36f" strokeWidth="2.200" /><rect x="1" y="8" width="15" height="11" rx="2" fill="#0fb981" />
      </svg>
      <div className="ml-auto flex items-start">
        <ChevronUp className="mt-[18px] size-[22px]" strokeWidth={2} />
        <svg className="mt-[22px] ml-[18px] h-[15px] w-[21px]" viewBox="0 0 21 15">
          <path d="M5 13Q0 12 1 8q1-3 4-3 2-5 7-4 4 1 5 5 4 1 3 5z" fill="#9b9b9b" /><path d="M2 12q4-6 9-4l8 4q-2 2-4 2H5q-2 0-3-2z" fill="#f4f4f4" />
        </svg>
        <svg className="mt-[20px] ml-[19px] h-[20px] w-[21px]" viewBox="0 0 21 20" fill="none" stroke="#fff" strokeWidth="1.500">
          <path d="M13 1H3Q1 1 1 3v11h12M5 18.500h12v-10M14.500 1h5v6h-5zM8 14v5" />
        </svg>
        <svg className="mt-[21px] ml-[8px] h-[18px] w-[21px]" viewBox="0 0 21 18" fill="none" stroke="#fff" strokeWidth="1.300">
          <path d="M1 6.500h4l4-4v13l-4-4H1zM11 6.500q2 2.500 0 5" /><path d="M14 4q4 5 0 10M17 2q5 7 0 14" stroke="#777" />
        </svg>
        <svg className="mt-[20px] ml-[9px] h-[18px] w-[21px]" viewBox="0 0 21 18">
          <rect x="2" y="6" width="15.500" height="10.500" rx="3" fill="none" stroke="#fff" strokeWidth="1.500" /><rect x="4.500" y="8.500" width="10.500" height="5.500" rx="1" fill="#fff" /><path d="M19 9v4h.8V9z" fill="#fff" stroke="#fff" />
          <path d="M5 0L1 7h3L2.500 12 8 5H5z" fill="#fff" stroke="#050505" strokeWidth="1" />
        </svg>
        <div className="mt-[13px] mr-[23px] ml-[21px] text-right leading-[20px]">
          <div className="-mt-[4px]">09:58:41 PM</div>
          <div>03-10-2025</div>
        </div>
      </div>
    </div>
  );
}

/* ---------- Page ---------- */

export default function App() {
  return (
    <div className="flex h-[993px] w-[1914px] flex-col overflow-hidden bg-[#3b3b3b] font-['Open_Sans','Noto_Sans',sans-serif]">
      <Toolbar />
      <FavouritesBar />
      <div className="flex h-[885px] shrink-0">
        <div className="relative w-[1841px] shrink-0 overflow-hidden rounded-tl-[10px] border-l border-[#c9cbcd] bg-[#f1f3f5] pl-[170px]">
          <div className="w-[1500px]">
            <SiteHeader />
            <Nav />
            <Hero />
            <h1 className="mt-[50px] h-[42px] overflow-hidden text-center text-[37.500px] leading-[42px] font-bold text-[#1f4a73]">
              Which is your biggest concern about using the Internet?
            </h1>
          </div>
          <div className="absolute bottom-0 -left-px flex h-[27px] w-[352px] items-center rounded-tr-[5px] bg-[#1f1f1f] pl-[5px] text-[14.100px] text-white">
            https://whatismyipaddress.com/ip/181.214.131.165
          </div>
          <div className="absolute top-[653px] right-0 flex h-[51px] w-[50px] items-center rounded-l-[5px] bg-[#f3f5f7] pl-[10px] shadow-[0_0_4px_rgba(0,0,0,0.050)]">
            <svg className="h-[30px] w-[30px] rounded-[4px] bg-linear-to-br from-[#e9eef2] from-55% to-[#c6a8ea]" viewBox="0 0 30 30" fill="none" stroke="#9a9ca3" strokeWidth="1.700">
              <path d="M7 8l4 3.500L7 15M23 8l-4 3.500L23 15M13 15q2.200 2 4.400 0" />
            </svg>
          </div>
          <svg className="absolute top-[826px] right-[19px] size-[40px] rounded-full shadow-[0_2px_6px_rgba(0,0,0,0.450)]" viewBox="0 0 40 40">
            <circle cx="20" cy="20" r="20" fill="#e84a4f" />
            <circle cx="20" cy="20" r="15.300" fill="none" stroke="#fff" strokeWidth="1.200" />
            <path d="M20 9.500q1.500 0 1.800 1.300 4.700 1.200 4.700 7 0 6.500 3.500 7.700v1.300H10v-1.300q3.500-1.200 3.500-7.700 0-5.800 4.700-7 .3-1.300 1.800-1.300zM17.500 28h5q-.5 2.200-2.500 2.200T17.500 28z" fill="#fff" />
          </svg>
        </div>
        <div className="flex w-[19px] shrink-0 flex-col items-center rounded-r-[9px] bg-[#2b2b2b]">
          <svg className="mt-[10px] h-[11px] w-[13px]" viewBox="0 0 13 11"><path d="M6.500.5L12.500 9q0 1.500-1 1.500h-10q-1 0-1-1.500z" fill="#9f9f9f" /></svg>
          <div className="mt-[8px] h-[116px] w-[11px] rounded-full bg-[#9f9f9f]" />
          <svg className="mt-auto mb-[9px] h-[11px] w-[13px]" viewBox="0 0 13 11"><path d="M6.500 10.500L.5 2Q.5.5 1.500.5h10q1 0 1 1.500z" fill="#9f9f9f" /></svg>
        </div>
        <SideBar />
      </div>
      <div className="h-[5px] shrink-0 bg-[#3b3b3b]" />
      <Taskbar />
    </div>
  );
}
